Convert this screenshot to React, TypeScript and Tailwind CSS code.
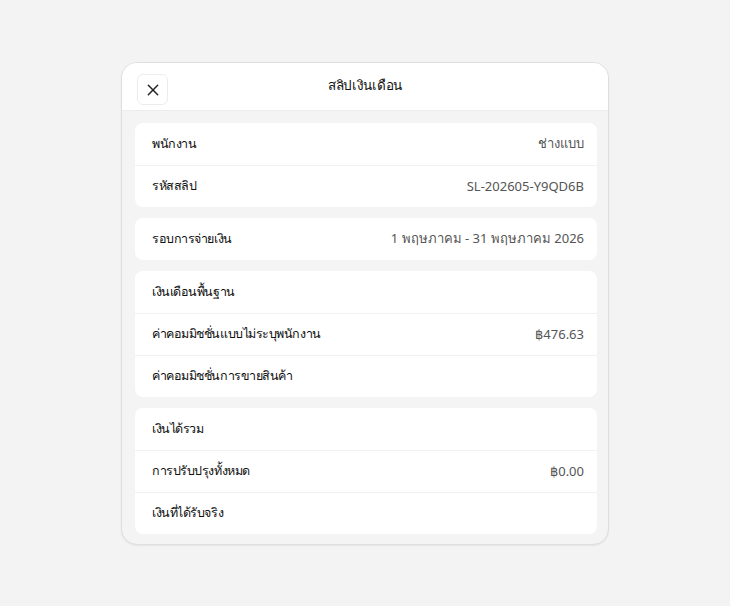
import React from 'react';

type Row = { label: string; value?: string };

const groups: Row[][] = [
    [
        { label: 'พนักงาน', value: 'ช่างแบบ' },
        { label: 'รหัสสลิป', value: 'SL-202605-Y9QD6B' },
    ],
    [{ label: 'รอบการจ่ายเงิน', value: '1 พฤษภาคม - 31 พฤษภาคม 2026' }],
    [
        { label: 'เงินเดือนพื้นฐาน' },
        { label: 'ค่าคอมมิชชั่นแบบไม่ระบุพนักงาน', value: '฿476.63' },
        { label: 'ค่าคอมมิชชั่นการขายสินค้า' },
    ],
    [
        { label: 'เงินได้รวม' },
        { label: 'การปรับปรุงทั้งหมด', value: '฿0.00' },
        { label: 'เงินที่ได้รับจริง' },
    ],
];

const App: React.FC = () => {
    return (
        <div className="min-h-[606px] w-full bg-[#f3f3f3] pt-[62px] font-['Noto_Sans',sans-serif]">
            <div className="ml-[121px] w-[488px] overflow-hidden rounded-2xl border border-[#dedede] bg-[#f4f4f4] shadow-[0_1px_2px_rgba(0,0,0,0.06)]">
                <div className="relative flex h-12 items-center justify-center border-b border-[#ececec] bg-white">
                    <button className="absolute left-[15px] top-[11px] flex h-[31px] w-[31px] items-center justify-center rounded-md border border-[#ececec] bg-white text-[#222]">
                        <svg width="16" height="16" viewBox="0 0 24 24" fill="none" stroke="currentColor" strokeWidth="2.2" strokeLinecap="round">
                            <path d="M5 5l14 14M19 5L5 19" />
                        </svg>
                    </button>
                    <h2 className="-mt-[3px] text-[13.5px] font-medium tracking-[-0.3px] text-[#111]">สลิปเงินเดือน</h2>
                </div>
                <div className="flex flex-col gap-[11px] pb-[10px] pl-[13px] pr-[11px] pt-[12px]">
                    {groups.map((g, i) => (
                        <div key={i} className="overflow-hidden rounded-lg bg-white">
                            {g.map((r, j) => (
                                <div
                                    key={j}
                                    className={`flex h-[42px] items-center justify-between pl-[17px] pr-[13px] ${j > 0 ? 'border-t border-[#f1f1f1]' : ''}`}
                                >
                                    <span className="text-[12.5px] font-medium tracking-[-0.45px] text-[#111]">{r.label}</span>
                                    {r.value && <span className="text-[13px] text-[#555]">{r.value}</span>}
                                </div>
                            ))}
                        </div>
                    ))}
                </div>
            </div>
        </div>
    );
};

export default App;
